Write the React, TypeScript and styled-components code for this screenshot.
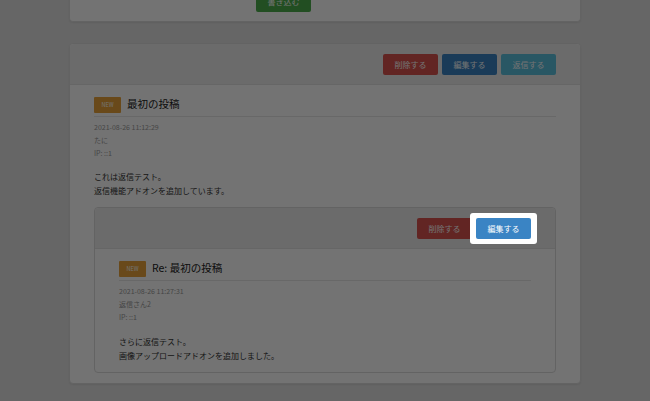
import { createGlobalStyle, styled } from "styled-components";

// TYPE

type Tone = "danger" | "primary" | "info" | "success";

type Post = {
  title: string;
  date: string;
  author: string;
  ip: string;
  lines: string[];
};

// DATA

const first: Post = {
  title: "最初の投稿",
  date: "2021-08-26 11:12:29",
  author: "たに",
  ip: "IP: ::1",
  lines: ["これは返信テスト。", "返信機能アドオンを追加しています。"],
};

const reply: Post = {
  title: "Re: 最初の投稿",
  date: "2021-08-26 11:27:31",
  author: "返信さん2",
  ip: "IP: ::1",
  lines: ["さらに返信テスト。", "画像アップロードアドオンを追加しました。"],
};

const tones: Record<Tone, string> = {
  danger: "#d9534f",
  primary: "#3a84c4",
  info: "#5bc0de",
  success: "#4cae4c",
};

// STYLE

const GlobalStyle = createGlobalStyle`
  html {
    overflow: hidden;
    background: #e3e3e3;
  }
  body {
    margin: 0;
    min-height: 100vh;
    font-family: "Noto Sans CJK JP", "Noto Sans", sans-serif;
    color: #333;
  }
`;

const Page = styled.div`
  width: 512px;
  margin: 0 auto;
  display: flex;
  flex-direction: column;
  gap: 21px;
`;

const Card = styled.div`
  background: #fff;
  border: 1px solid #dcdcdc;
  border-radius: 4px;
  box-shadow: 0 1px 2px rgba(0, 0, 0, 0.08);
`;

const FormCard = styled(Card)`
  margin-top: -14px;
  border-top: none;
  border-radius: 0 0 4px 4px;
  padding: 0 0 9px 186px;
`;

const Header = styled.div`
  display: flex;
  justify-content: flex-end;
  align-items: center;
  gap: 4px;
  height: 40px;
  padding: 0 24px;
  background: #eee;
  border-bottom: 1px solid #e2e2e2;
  border-radius: 4px 4px 0 0;
`;

const Button = styled.button<{ $tone: Tone }>`
  width: 55px;
  height: 21px;
  padding: 0;
  border: none;
  border-radius: 2px;
  background: ${(p) => tones[p.$tone]};
  color: #fff;
  font-family: inherit;
  font-size: 8px;
  line-height: 21px;
`;

const Spotlight = styled.span`
  position: relative;
  z-index: 10;
  display: inline-flex;

  &::before {
    content: "";
    position: absolute;
    inset: -5px -6px;
    background: #fff;
    border-radius: 3px;
    box-shadow: 0 0 0 3000px rgba(0, 0, 0, 0.55);
    z-index: -1;
  }
`;

const Body = styled.div<{ $bottom: number }>`
  padding: 12px 24px ${(p) => p.$bottom}px 24px;
`;

const TitleRow = styled.div`
  display: flex;
  align-items: center;
  gap: 6px;
  padding-bottom: 3px;
  border-bottom: 1px solid #e6e6e6;
`;

const Badge = styled.span`
  width: 27px;
  height: 16px;
  border-radius: 1px;
  background: #e8a33a;
  color: #fff;
  font-size: 5.5px;
  line-height: 16px;
  text-align: center;
`;

const Title = styled.span`
  font-size: 10.5px;
  line-height: 14px;
  margin-top: -2px;
  color: #222;
`;

const Meta = styled.div`
  margin-top: 4px;
  font-size: 7px;
  line-height: 12.8px;
  color: #9a9a9a;
`;

const Text = styled.div`
  margin-top: 11px;
  font-size: 8px;
  line-height: 14px;
  color: #333;
`;

const Nested = styled(Card)`
  margin-top: 9px;
  box-shadow: none;
`;

// VIEW

function PostBody({ post }: { post: Post }) {
  return (
    <>
      <TitleRow>
        <Badge>NEW</Badge>
        <Title>{post.title}</Title>
      </TitleRow>
      <Meta>
        <div>{post.date}</div>
        <div>{post.author}</div>
        <div>{post.ip}</div>
      </Meta>
      <Text>
        {post.lines.map((l) => (
          <div key={l}>{l}</div>
        ))}
      </Text>
    </>
  );
}

function App() {
  return (
    <>
      <GlobalStyle />
      <Page>
        <FormCard>
          <Button $tone="success">書き込む</Button>
        </FormCard>
        <Card>
          <Header>
            <Button $tone="danger">削除する</Button>
            <Button $tone="primary">編集する</Button>
            <Button $tone="info">返信する</Button>
          </Header>
          <Body $bottom={10}>
            <PostBody post={first} />
            <Nested>
              <Header>
                <Button $tone="danger">削除する</Button>
                <Spotlight>
                  <Button $tone="primary">編集する</Button>
                </Spotlight>
              </Header>
              <Body $bottom={9}>
                <PostBody post={reply} />
              </Body>
            </Nested>
          </Body>
        </Card>
      </Page>
    </>
  );
}

export default App;
